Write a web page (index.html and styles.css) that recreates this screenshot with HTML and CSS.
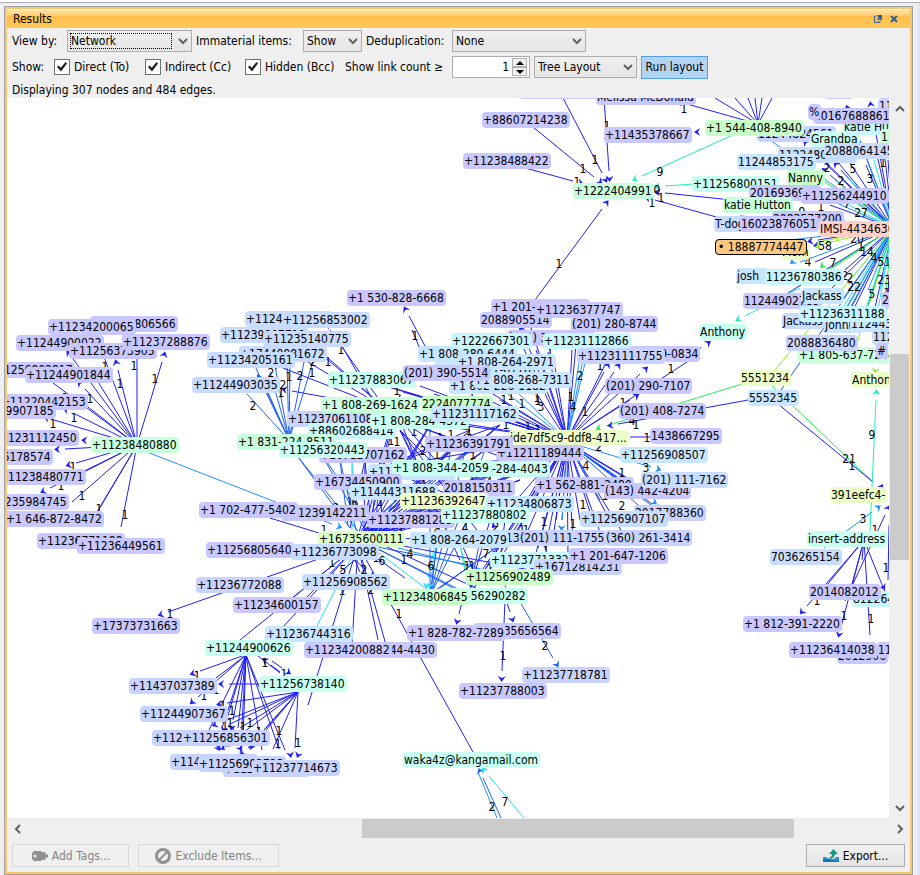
FILE: index.html
```html
<!DOCTYPE html>
<html lang="en">
<head>
<meta charset="utf-8">
<title>Results</title>
<link rel="stylesheet" href="styles.css">
</head>
<body>
<main class="panel">
  <header class="titlebar">
    <h1>Results</h1>
    <button class="tool" type="button" aria-label="Float">
      <svg width="8" height="8" viewBox="0 0 8 8"><path d="M2 1H0.5V7.5H6V5.5" fill="none" stroke="#2f6098"/><path d="M3 0H8V5H7L5.5 4L4 5.5L3 4.5L4.5 3Z" fill="#2f6098"/></svg>
    </button>
    <button class="tool" type="button" aria-label="Close">
      <svg width="8" height="8" viewBox="0 0 8 8"><path d="M1 1L7 7M7 1L1 7" stroke="#2f6098" stroke-width="2"/></svg>
    </button>
  </header>

  <form class="options">
    <div class="row">
      <label class="l-view" for="view">View by:</label>
      <span class="combo combo-view focused"><select id="view"><option>Network</option></select><svg class="chev" viewBox="0 0 10 7"><path d="M1 1L5 5L9 1"/></svg></span>
      <label class="l-wide" for="immaterial">Immaterial items:</label>
      <span class="combo combo-show"><select id="immaterial"><option>Show</option></select><svg class="chev" viewBox="0 0 10 7"><path d="M1 1L5 5L9 1"/></svg></span>
      <label class="l-mid" for="dedup">Deduplication:</label>
      <span class="combo combo-dedup"><select id="dedup"><option>None</option></select><svg class="chev" viewBox="0 0 10 7"><path d="M1 1L5 5L9 1"/></svg></span>
    </div>
    <div class="row">
      <span class="l-show">Show:</span>
      <label class="check l-mid"><input type="checkbox" checked>Direct (To)</label>
      <label class="check l-long"><input type="checkbox" checked>Indirect (Cc)</label>
      <label class="check l-long"><input type="checkbox" checked>Hidden (Bcc)</label>
      <label class="l-wide" for="links">Show link count ≥</label>
      <span class="spinner"><input id="links" type="text" value="1">
        <span class="steps">
          <button type="button" aria-label="Increase"><svg width="8" height="4" viewBox="0 0 8 4"><path d="M0 4L4 0L8 4Z"/></svg></button>
          <button type="button" aria-label="Decrease"><svg width="8" height="4" viewBox="0 0 8 4"><path d="M0 0L4 4L8 0Z"/></svg></button>
        </span>
      </span>
      <span class="combo combo-layout"><select aria-label="Layout"><option>Tree Layout</option></select><svg class="chev" viewBox="0 0 10 7"><path d="M1 1L5 5L9 1"/></svg></span>
      <button class="run" type="button">Run layout</button>
    </div>
    <p class="status">Displaying 307 nodes and 484 edges.</p>
  </form>

  <section class="viewer">
    <div class="viewport"><div class="scene" id="scene"><svg id="edges" width="1000" height="900"></svg></div></div>
    <div class="bar bar-v">
      <button type="button" aria-label="Scroll up"><svg width="10" height="7" viewBox="0 0 10 7"><path d="M1 6L5 2L9 6"/></svg></button>
      <i class="thumb"></i>
      <button type="button" aria-label="Scroll down"><svg width="10" height="7" viewBox="0 0 10 7"><path d="M1 1L5 5L9 1"/></svg></button>
    </div>
    <div class="bar bar-h">
      <button type="button" aria-label="Scroll left"><svg width="7" height="10" viewBox="0 0 7 10"><path d="M6 1L2 5L6 9"/></svg></button>
      <i class="thumb"></i>
      <button type="button" aria-label="Scroll right"><svg width="7" height="10" viewBox="0 0 7 10"><path d="M1 1L5 5L1 9"/></svg></button>
    </div>
  </section>

  <footer class="actions">
    <button class="action" type="button" disabled>
      <svg width="17" height="12" viewBox="0 0 17 12"><path d="M3 1H10L12 3V9L10 11H3L1 9V3Z" fill="#909090"/><circle cx="4" cy="6" r="1.500" fill="#efefef"/><path d="M9 6H17M13 2V10" stroke="#909090" stroke-width="3"/></svg>
      Add Tags...
    </button>
    <button class="action" type="button" disabled>
      <svg width="16" height="16" viewBox="0 0 16 16"><circle cx="8" cy="8" r="6.500" fill="none" stroke="#909090" stroke-width="3"/><path d="M12 4L4 12" stroke="#909090" stroke-width="2"/></svg>
      Exclude Items...
    </button>
    <button class="action export" type="button">
      <svg width="16" height="14" viewBox="0 0 16 14"><path d="M0 8H3L5 10H11L13 8H16V13H0Z" fill="#2a8fd0"/><path d="M0 11Q4 9 8 11T16 11V13H0Z" fill="#1670b4"/><path d="M4 9Q9 9 9 5H6L10.500 0L15 5H12Q12 9 7 10Z" fill="#129a86"/></svg>
      Export...
    </button>
  </footer>
</main>
<script src="graph.js"></script>
</body>
</html>
```
FILE: styles.css
```css
* { box-sizing: border-box; }

body {
  margin: 0;
  height: 100vh;
  min-height: 480px;
  display: flex;
  padding: 3px 7px 0 4px;
  background: linear-gradient(#fff 2px, #aeaeb4 2px, #aeaeb4 3px, transparent 3px),
    linear-gradient(to left, #dbe7fa 3px, #efeff1 3px);
  font: 12px/16px "DejaVu Sans Condensed", "DejaVu Sans", sans-serif;
  color: #000;
}

button, select, input { font: inherit; color: inherit; margin: 0; }

.panel {
  flex: 1;
  min-width: 0;
  display: flex;
  flex-direction: column;
  margin-top: 3px;
  border: 1px solid #a0a0a2;
  background: #efefef;
  box-shadow: inset 0 0 0 2px #fac76e;
  padding: 2px;
}

.titlebar {
  display: flex;
  align-items: center;
  height: 19px;
  padding: 0 12px 0 6px;
  gap: 8px;
  border-top: 1px solid #fff8e8;
  background: linear-gradient(#ffe3ab, #fecb6c 6px, #fec04c 6px, #ffc857);
}
.titlebar h1 { flex: 1; margin: 0; font: inherit; }
.tool { border: 0; padding: 0; background: none; display: flex; }

.options { padding: 2px 5px 0; }
.row { display: flex; align-items: center; height: 22px; gap: 4px; margin-bottom: 4px; white-space: nowrap; }
.status { margin: 0; height: 16px; }

.l-show { min-width: 38px; }
.l-view { min-width: 51px; }
.l-mid { min-width: 82px; }
.l-long { min-width: 91px; }
.l-wide { min-width: 103px; }

.combo { position: relative; height: 22px; flex: none; }
.combo select {
  appearance: none;
  width: 100%;
  height: 22px;
  padding: 0 3px;
  border: 1px solid #acacac;
  border-radius: 0;
  background: linear-gradient(#f0f0f0, #e5e5e5);
  outline: 0;
}
.chev { position: absolute; right: 4px; top: 8px; width: 10px; height: 7px; pointer-events: none; }
.chev path, .bar path { fill: none; stroke: #606060; stroke-width: 2; }
.focused::after { content: ""; position: absolute; inset: 3px 20px 3px 3px; border: 1px dotted #000; pointer-events: none; }
.combo-view { width: 125px; }
.combo-show { width: 59px; }
.combo-dedup { width: 134px; }
.combo-layout { width: 103px; }

.check { display: flex; align-items: center; gap: 4px; margin-right: 5px; }
.check input {
  appearance: none;
  width: 16px;
  height: 16px;
  border: 1px solid #707070;
  background: #fff;
  display: grid;
  place-items: center;
}
.check input::before {
  content: "";
  width: 10px;
  height: 10px;
  background: #202020;
  clip-path: polygon(0 50%, 15% 35%, 38% 58%, 85% 0, 100% 14%, 40% 95%);
}
.spinner { display: flex; flex: none; width: 78px; height: 22px; border: 1px solid #acacac; background: #fff; }
.spinner input { flex: 1; width: 0; border: 0; padding: 0 3px; text-align: right; background: none; }
.steps { display: flex; flex-direction: column; width: 17px; padding: 1px 2px 1px 0; }
.steps button { flex: 1; padding: 0; border: 1px solid #b0b0b0; background: #f0f0f0; display: flex; align-items: center; justify-content: center; }
.run { height: 23px; width: 67px; padding: 0; border: 1px solid #569de5; background: #b2d4f3; }

.viewer { flex: 1; min-height: 0; display: grid; grid-template: minmax(0, 1fr) 20px / minmax(0, 1fr) 21px; }
.viewport { position: relative; overflow: hidden; background: #fff; }
.bar { display: grid; background: #efefef; }
.bar-v { grid-template: 20px 236fr 207fr 238fr 20px / 19px; padding-left: 1px; }
.bar-h { grid-column: 1 / 3; grid-template: 19px / 20px 335fr 432fr 96fr 20px; padding-top: 1px; }
.bar button { border: 0; padding: 0; background: none; display: flex; align-items: center; justify-content: center; }
.thumb { background: #cbcbcb; }
.bar-v .thumb { grid-row: 3; }
.bar-v button:last-child { grid-row: 5; }
.bar-h .thumb { grid-column: 3; }
.bar-h button:last-child { grid-column: 5; }

.actions { display: flex; gap: 9px; padding: 6px 5px 5px; }
.action {
  display: flex;
  align-items: center;
  justify-content: center;
  gap: 4px;
  height: 23px;
  width: 117px;
  padding: 0;
  white-space: nowrap;
  border: 1px solid #d8d8d8;
  background: #efefef;
  color: #838383;
}
.action + .action { width: 141px; }
.action.export { width: 99px; margin-left: auto; border-color: #acacac; background: linear-gradient(#f0f0f0, #e5e5e5); color: #000; }

/* Graph canvas */
.scene { position: absolute; left: -7px; top: -98px; }
#edges { display: block; }
#edges text { text-anchor: middle; }
.node {
  position: absolute;
  height: 16px;
  line-height: 16px;
  padding: 0 2px 0 1px;
  border-radius: 4px;
  white-space: pre;
}
.lav { background: #c8c8ff; }
.peri { background: #c8d4ff; }
.sky { background: #c8dcff; }
.pale { background: #c8e6ff; }
.cyan { background: #c8f6ff; }
.teal { background: #c8fff0; }
.mint { background: #c8ffdc; }
.green { background: #c8ffc8; }
.lime { background: #dcffc8; }
.lemon { background: #ecffc8; }
.pink { background: #ffd0c8; }
.picked { background: #ffc882; border: 1px solid #000; line-height: 14px; padding: 0 3px 0 2px; }
```
FILE: graph.js
```js
// Each node: left edge, vertical centre, label. Later nodes lie on top.
const list = [];
const add = (kind, rows) => rows.forEach(r => list.push([kind, ...r]));

// Left hub
add("lav", [[-13,370,"+11256802817"],[90,324,"+11234806566"],[48,327,"+11234200065"],[16,343,"+11244900022"],
  [69,351,"+11256373905"],[122,342,"+11237288876"],[25,375,"+11244901844"],[0,402,"+11220442153"],
  [-32,411,"+11249907185"],[-9,438,"+11231112450"],[-35,457,"+11236178574"],[-2,477,"+11238480771"],
  [-19,502,"+11235984745"],[5,519,"+1 646-872-8472"],[37,541,"+11236771188"],[77,546,"+11236449561"]]);
add("mint", [[91,445,"+11238480880"]]);

// Upper left cluster
add("sky", [[245,319,"+11244903002"],[282,320,"+11256853002"],[220,335,"+11239907711"],[239,354,"+17440981672"],
  [263,339,"+11235140775"],[207,360,"+11234205161"],[192,385,"+11244903035"]]);
add("lav", [[347,298,"+1 530-828-6668"]]);
add("teal", [[328,380,"+11237883067"]]);
add("peri", [[287,419,"+11237061108"]]);
add("cyan", [[308,431,"+88602688414"]]);
add("mint", [[237,442,"+1 831-224-8511"]]);
add("lav", [[319,455,"+16712707162"]]);
add("teal", [[279,450,"+11256320443"]]);

// Centre cluster
add("lav", [[491,307,"+1 201-647-2806"],[480,320,"2088905514"],[535,310,"+11236377747"],[571,324,"(201) 280-8744"],
  [507,338,"(201) 388-1901"],[613,354,"(201) 659-0834"]]);
add("pale", [[418,354,"+1 808-280-6444"],[434,370,"+1 808-227-6176"]]);
add("cyan", [[451,341,"+1222667301"],[543,341,"+11231112866"]]);
add("pale", [[457,362,"+1 808-264-2971"],[449,386,"+1 802-226-1182"],[473,380,"+1 808-268-7311"]]);
add("peri", [[577,356,"+11231111755"]]);
add("lav", [[403,373,"(201) 390-5514"],[605,386,"(201) 290-7107"],[619,411,"(201) 408-7274"]]);
add("green", [[421,404,"2224077774"]]);
add("mint", [[321,405,"+1 808-269-1624"]]);
add("teal", [[370,421,"+1 808-284-4372"]]);
add("pale", [[431,414,"+11231117162"]]);
add("lav", [[650,436,"1438667295"]]);
add("lemon", [[509,438,"ide7df5c9-ddf8-417..."]]);
add("lav", [[496,453,"+11211189444"],[425,444,"+11236391791"]]);
add("pale", [[368,472,"+11499913888"]]);
add("teal", [[451,469,"+1 808-284-4043"],[392,468,"+1 808-344-2059"]]);
add("lav", [[314,482,"+16734450900"],[443,488,"2018150311"],[535,485,"+1 562-881-2480"],[604,491,"(143) 442-4204"]]);
add("sky", [[641,480,"(201) 111-7162"]]);
add("pale", [[620,455,"+11256908507"],[350,492,"+11444311688"]]);
add("peri", [[634,513,"2017788360"]]);
add("sky", [[580,519,"+11256907107"]]);
add("lemon", [[400,501,"+11236392647"]]);
add("pale", [[486,504,"+11234806873"]]);
add("lav", [[281,513,"+11239142211"],[199,510,"+1 702-477-5402"],[367,520,"+11237881283"]]);
add("teal", [[441,515,"+11237880802"]]);
add("lime", [[318,539,"+16735600111"]]);
add("sky", [[434,538,"+11237718813"]]);
add("pale", [[410,540,"+1 808-264-2079"]]);
add("peri", [[605,538,"(360) 261-3414"],[519,538,"(201) 111-1755"]]);
add("lav", [[206,550,"+11256805640"]]);
add("sky", [[291,552,"+11236773098"]]);
add("cyan", [[490,560,"+11237713321"]]);
add("peri", [[534,567,"+16712814231"]]);
add("lav", [[569,556,"+1 201-647-1206"]]);
add("green", [[465,577,"+11256902489"]]);
add("teal", [[440,596,"+11256290282"]]);
add("green", [[382,597,"+11234806845"]]);
add("sky", [[302,582,"+11256908562"]]);

// Lower fans
add("peri", [[196,585,"+11236772088"]]);
add("lav", [[233,605,"+11234600157"],[92,626,"+17373731663"]]);
add("pale", [[265,634,"+11236744316"]]);
add("lav", [[338,650,"+1 202-644-4430"],[304,650,"+11234200882"],[473,631,"+11235656564"],[407,633,"+1 828-782-7289"],[459,691,"+11237788003"]]);
add("peri", [[522,675,"+11237718781"]]);
add("teal", [[205,648,"+11244900626"],[259,684,"+11256738140"]]);
add("peri", [[129,686,"+11437037389"],[140,714,"+11244907367"],[152,738,"+11249907712"],[182,738,"+11256856301"],
  [170,762,"+11444907712"],[223,769,"+11256902711"],[198,764,"+11256902723"],[252,768,"+11237714673"]]);
add("teal", [[403,760,"waka4z@kangamail.com"]]);

// Top
add("lav", [[519,91,"+11236771204"],[596,97,"Melissa McDonald"],[482,120,"+88607214238"],[463,161,"+11238488422"],[604,135,"+11435378667"]]);
add("mint", [[573,191,"+1222404991"]]);

// Right hub
add("lav", [[824,91,"1124"]]);
add("peri", [[878,106,"1122"],[757,134,"11244824561"]]);
add("green", [[705,128,"+1 544-408-8940"]]);
add("teal", [[810,139,"Grandpa"]]);
add("cyan", [[843,127,"katie Hutton"]]);
add("mint", [[880,137,"112"]]);
add("lav", [[813,116,"20167688861"],[808,112,"%"]]);
add("sky", [[778,155,"11224807135"],[824,151,"2088064145"]]);
add("pale", [[737,162,"11244853175"]]);
add("green", [[787,178,"Nanny"]]);
add("teal", [[692,184,"+11256800151"]]);
add("lav", [[749,193,"2016936988"],[801,196,"+11256244910"]]);
add("mint", [[723,205,"katie Hutton"]]);
add("lav", [[772,219,"2083577200"]]);
add("sky", [[714,224,"T-dog"]]);
add("pink", [[819,229,"IMSI-44346301"]]);
add("lav", [[740,224,"16023876051"]]);
add("lemon", [[781,252,"Mom"]]);
add("picked", [[715,247,"• 18887774447"]]);
add("pale", [[736,276,"josh  "]]);
add("cyan", [[765,277,"11236780386"]]);
add("lav", [[743,301,"11244902789"]]);
add("pale", [[801,296,"Jackass"]]);
add("sky", [[782,321,"Jackass"]]);
add("pale", [[824,325,"Johnny"],[850,324,"11244316"]]);
add("lav", [[881,300,"20"]]);
add("cyan", [[799,314,"+11236311188"]]);
add("sky", [[872,337,"1125"]]);
add("mint", [[798,355,"+1 805-637-7244"]]);
add("peri", [[786,343,"2088836480"]]);
add("lav", [[876,351,"#"]]);
add("teal", [[699,332,"Anthony"]]);
add("lemon", [[851,380,"Anthony"],[740,378,"5551234"]]);
add("pale", [[748,398,"5552345"]]);
add("lemon", [[830,495,"391eefc4-"]]);
add("teal", [[807,539,"insert-address"]]);
add("sky", [[770,557,"7036265154"]]);
add("cyan", [[852,599,"8122644"]]);
add("lav", [[809,592,"2014082012"],[743,624,"+1 812-391-2220"],[837,656,"2012906"],[877,650,"1123"],[789,650,"+11236414038"]]);

// Edges
const svg = document.getElementById("edges");
const NS = "http://www.w3.org/2000/svg";
const BLUE = "#2020f8", AZURE = "#1e60f4", SKY = "#2090ff", AQUA = "#20e0f8", TEAL = "#20eec0", GREEN = "#20ee50", YELLOW = "#90f020";
const draw = (tag, attrs, text) => {
  const el = document.createElementNS(NS, tag);
  for (const k in attrs) el.setAttribute(k, attrs[k]);
  if (text) el.textContent = text;
  svg.append(el);
};
function head(x, y, angle, color) {
  draw("path", { d: "M0 0L-6 -4L-4 0L-6 4Z", fill: color, transform: `translate(${x} ${y}) rotate(${angle})` });
}
function edge(x1, y1, x2, y2, color = BLUE, arrow = false) {
  draw("line", { x1, y1, x2, y2, stroke: color });
  if (!arrow) return;
  const a = Math.atan2(y2 - y1, x2 - x1);
  head(x2 + 11 * Math.cos(a), y2 + 11 * Math.sin(a), a * 180 / Math.PI, color);
}
const fan = (x, y, ends, color, arrow) => ends.forEach(e => edge(x, y, e[0], e[1], color, arrow));

fan(137, 445, [[162,362],[137,345],[118,370],[73,359],[85,389],[53,383],[73,413],[54,420],[92,441],[65,449],[76,463],[50,488],[94,517]], BLUE, true);
fan(137, 445, [[104,357],[92,372],[88,407],[72,502],[98,511],[121,527],[80,474]], BLUE);
edge(147, 452, 332, 524, SKY, true);

fan(289, 440, [[254,364],[247,394],[262,384],[275,366]], AZURE, true);
fan(289, 440, [[267,390],[287,362],[290,366],[304,362],[318,345],[270,372]], AZURE);
fan(385, 408, [[328,358],[308,362],[283,368],[292,391],[330,330],[316,350]], BLUE, true);
fan(374, 402, [[334,332]], BLUE, true);
edge(425, 346, 409, 316, BLUE, true);
edge(423, 356, 412, 330);
fan(298, 457, [[350,528],[362,536]], AZURE, true);
fan(320, 452, [[365,530],[378,535]], AZURE);

// Centre hub
fan(567, 440, [[524,336],[553,355],[614,372],[640,374],[630,400],[604,372],[548,352]], BLUE, true);
fan(567, 440, [[522,345],[572,350],[576,345],[610,355],[690,360],[508,350],[536,350],[622,380],[530,325],
  [434,394],[455,400],[470,396],[485,398],[500,400],[480,386],[403,392],[385,386],[420,386],[440,420],[460,425],[350,375]], BLUE);
fan(567, 440, [[581,350],[588,350],[583,360],[515,390],[490,380]], SKY);
fan(567, 442, [[652,504],[600,532],[534,560],[520,526],[499,520]], BLUE, true);
fan(567, 442, [[640,494],[634,482],[645,490],[590,512],[573,540],[568,560],[562,520],[556,520],[552,545],[545,550],
  [538,548],[528,530],[510,545],[500,560],[490,570],[475,585],[630,545],[610,520],[580,520],[465,596]], BLUE);
fan(567, 442, [[651,467],[648,498],[562,520]], SKY, true);
fan(567, 442, [[655,520],[660,512],[600,500]], AZURE);
edge(742, 384, 606, 426, GREEN, true);
edge(748, 400, 618, 424, BLUE, true);
edge(650, 437, 630, 437);
edge(535, 300, 602, 209, BLUE, true);

// Tangle between the centre hubs
const left = [[362,538],[366,540],[358,536],[430,596],[400,420],[382,468]];
const mid = [[430,425],[450,452],[470,430],[485,450],[475,505],[440,520],[510,460],[500,425],[540,450],[520,480],[400,395],[560,455]];
left.slice(0, 3).forEach(a => mid.forEach(b => edge(a[0], a[1], b[0], b[1])));
left.slice(3).forEach((a, i) => mid.slice(i, i + 6).forEach(b => edge(a[0], a[1], b[0], b[1], i ? BLUE : AZURE)));
fan(400, 430, [[440,470],[470,500],[424,476],[500,560],[460,560]], BLUE);
fan(352, 460, [[353,486],[352,530]], AQUA);
fan(365, 460, [[364,530],[372,536],[350,528]], BLUE, true);
fan(380, 460, [[370,530],[382,528],[376,524]], BLUE);
fan(340, 460, [[348,526],[356,530]], AZURE);
fan(395, 500, [[376,534],[372,540]], SKY, true);
fan(440, 520, [[428,578],[431,578]], AQUA, true);
fan(460, 545, [[465,570],[468,575]], TEAL);
fan(366, 543, [[428,590]], AQUA);
fan(372, 546, [[475,566],[460,590],[476,600]], AZURE);
fan(372, 540, [[480,590],[530,570],[500,535]], BLUE);
edge(398, 548, 500, 574, SKY);
edge(475, 500, 490, 480, GREEN); edge(510, 460, 530, 450, GREEN);
edge(436, 590, 500, 545, BLUE); edge(470, 590, 480, 540, AZURE);
edge(440, 588, 520, 530, AZURE); edge(474, 588, 545, 470);
edge(462, 545, 478, 580); edge(490, 520, 470, 590); edge(505, 520, 500, 560);

// Lower left hub
fan(358, 545, [[168,612]], BLUE, true);
fan(358, 545, [[270,518],[262,650],[300,604],[240,640],[308,705],[352,645],[386,645],[473,752],[405,578],[290,600],[378,640]], BLUE);
fan(358, 545, [[315,630]], AQUA);
fan(355, 560, [[340,572],[360,572],[366,570]], BLUE, true);
edge(245, 655, 200, 671, BLUE, true);
fan(246, 655, [[198,697],[209,730],[226,722],[222,728],[238,728],[233,720]], BLUE, true);
fan(246, 655, [[243,740],[262,750],[285,750],[279,749],[216,678],[240,758]], BLUE);
edge(258, 656, 280, 673, BLUE); edge(272, 661, 282, 668, BLUE, true); edge(280, 672, 271, 665, BLUE, true);
edge(260, 684, 229, 684, BLUE, true);
fan(298, 692, [[227,703],[222,722],[240,728],[233,740],[248,748]], BLUE, true);
fan(298, 692, [[262,735],[273,749],[295,748],[255,740],[230,724]], BLUE);
head(220, 751, 60, BLUE); head(218, 748, 80, BLUE); head(225, 750, 40, BLUE); head(242, 751, 60, BLUE);
head(250, 750, 110, BLUE); head(291, 758, 80, BLUE); head(297, 758, 110, BLUE);
edge(462, 602, 459, 614, BLUE, true);
edge(505, 600, 502, 671, BLUE, true);
edge(506, 600, 510, 612, BLUE, true);
edge(520, 602, 553, 658, AZURE, true);
edge(505, 584, 507, 596, SKY);
edge(497, 818, 478, 772, SKY); edge(501, 818, 483, 778, AZURE, true); edge(524, 818, 489, 776, AQUA, true);

// Top
edge(533, 127, 594, 177, BLUE, true);
edge(525, 168, 573, 181, BLUE, true);
edge(563, 98, 602, 173, BLUE, true);
edge(604, 98, 609, 171, BLUE, true);
edge(735, 134, 642, 176, TEAL, true);
edge(693, 184, 665, 186, TEAL, true);
edge(760, 203, 665, 193, BLUE, true);
edge(720, 218, 655, 200, BLUE, true);
fan(758, 124, [[687,104]], BLUE, true);
head(694, 132, 180, BLUE);
fan(758, 124, [[715,98],[735,98],[748,98],[755,98],[762,98],[772,98]], BLUE);

// Right hub
fan(893, 228, [[841,170],[811,148],[850,115],[872,112],[826,164],[830,175],[818,240]], BLUE, true);
fan(893, 228, [[788,293],[815,262],[830,290],[850,310],[846,325],[852,190],[858,200],[740,216],[830,205],[866,165],[876,150],
  [884,150],[888,160],[892,130],[870,330],[885,330],[836,160],[800,215],[848,160],[888,300],[845,270]], BLUE);
fan(893, 228, [[800,262],[860,240],[790,240],[770,140],[834,330],[848,312],[830,200],[856,130],[868,290],[860,330],[842,300],[838,322]], SKY);
fan(893, 228, [[850,280],[820,190],[840,312],[862,320],[874,160],[876,320],[880,290],[846,175]], AQUA);
fan(893, 228, [[822,275],[824,272],[816,176],[835,180]], GREEN);
fan(893, 228, [[822,244],[775,370],[858,340],[818,242]], YELLOW);
fan(893, 228, [[880,340],[870,300]], GREEN);
edge(893, 228, 781, 390, AZURE);
head(813, 246, 170, BLUE); head(815, 247, 170, YELLOW); head(790, 264, 140, SKY); head(820, 268, 140, GREEN);
edge(800, 288, 745, 316, TEAL, true);
edge(690, 360, 701, 347, BLUE); head(711, 341, -35, BLUE);
edge(770, 384, 873, 482, GREEN); edge(778, 404, 873, 482, BLUE);
edge(870, 531, 876, 400, TEAL, true);
edge(880, 350, 877, 363, YELLOW, true);
edge(824, 548, 872, 512, SKY, true);
edge(845, 601, 885, 515, BLUE, true);
edge(876, 499, 882, 486, GREEN); head(883, 484, -60, BLUE);
edge(889, 525, 888, 580);
fan(864, 540, [[807,606],[841,627]], BLUE, true);
fan(864, 540, [[827,585],[870,635],[885,592],[852,584],[862,560]], BLUE);
head(885, 590, 60, BLUE);

// Link counts
const counts = `1 155 379,1 134 366,1 105 367,1 120 384,1 90 399,1 65 398,1 74 418,1 53 424,1 73 467,1 61 486,1 82 496,1 99 509,1 125 515,
1 415 336,1 341 350,1 328 362,2 313 362,2 300 376,2 271 373,1 289 377,1 312 373,2 283 385,1 281 393,2 253 406,1 397 391,
1 550 352,1 600 366,2 580 376,1 571 397,4 573 407,1 585 412,1 538 401,3 541 407,1 504 400,1 511 396,1 522 404,1 537 398,1 472 397,1 623 403,4 632 421,1 636 425,1 647 438,
1 671 369,1 506 425,1 528 427,1 538 430,2 423 451,1 437 455,1 473 455,1 451 435,1 440 438,1 391 441,1 397 442,1 414 432,1 469 431,2 599 447,4 586 466,3 646 468,1 622 473,
1 423 483,1 472 481,4 489 482,1 384 464,2 622 506,1 583 505,1 605 496,1 544 522,1 573 524,4 465 528,2 496 527,1 522 530,1 526 530,6 437 533,
1 350 502,6 355 503,1 380 502,2 336 508,1 324 530,1 401 530,1 404 560,4 410 554,6 431 566,7 486 554,1 467 566,1 472 566,1 546 551,6 382 561,1 376 558,5 343 570,2 364 570,1 332 563,1 342 591,2 371 590,1 399 614,1 490 569,
1 170 614,1 197 676,1 204 696,1 216 690,1 223 706,1 232 711,1 225 726,1 230 723,1 243 727,1 250 723,1 259 732,1 279 731,1 278 744,1 298 743,1 265 663,1 284 674,
2 545 646,1 503 656,2 492 807,7 505 802,
1 595 160,1 583 169,1 577 182,1 607 126,1 684 109,9 660 172,0 657 190,1 661 198,1 652 203,1 559 264,
2 827 168,5 853 169,2 841 181,3 870 179,1 883 163,1 821 207,9 802 212,7 847 204,27 861 213,20 857 239,58 825 246,1 861 247,14 867 252,4 808 262,7 833 263,4 874 258,5 881 262,13 891 262,22 854 287,2 850 278,5 872 294,23 884 280,2 845 276,1 887 293,
9 872 435,21 849 459,1 852 466,3 863 519,1 875 530,1 817 601,1 844 616,1 871 619,1 886 568`;
counts.split(",").forEach(s => {
  const [n, x, y] = s.trim().split(" ");
  draw("text", { x, y: +y + 4 }, n);
});

const scene = document.getElementById("scene");
list.forEach(([kind, x, y, label]) => {
  const el = document.createElement("span");
  el.className = "node " + kind;
  el.style.left = x + "px";
  el.style.top = y - 8 + "px";
  el.textContent = label;
  scene.append(el);
});
```
